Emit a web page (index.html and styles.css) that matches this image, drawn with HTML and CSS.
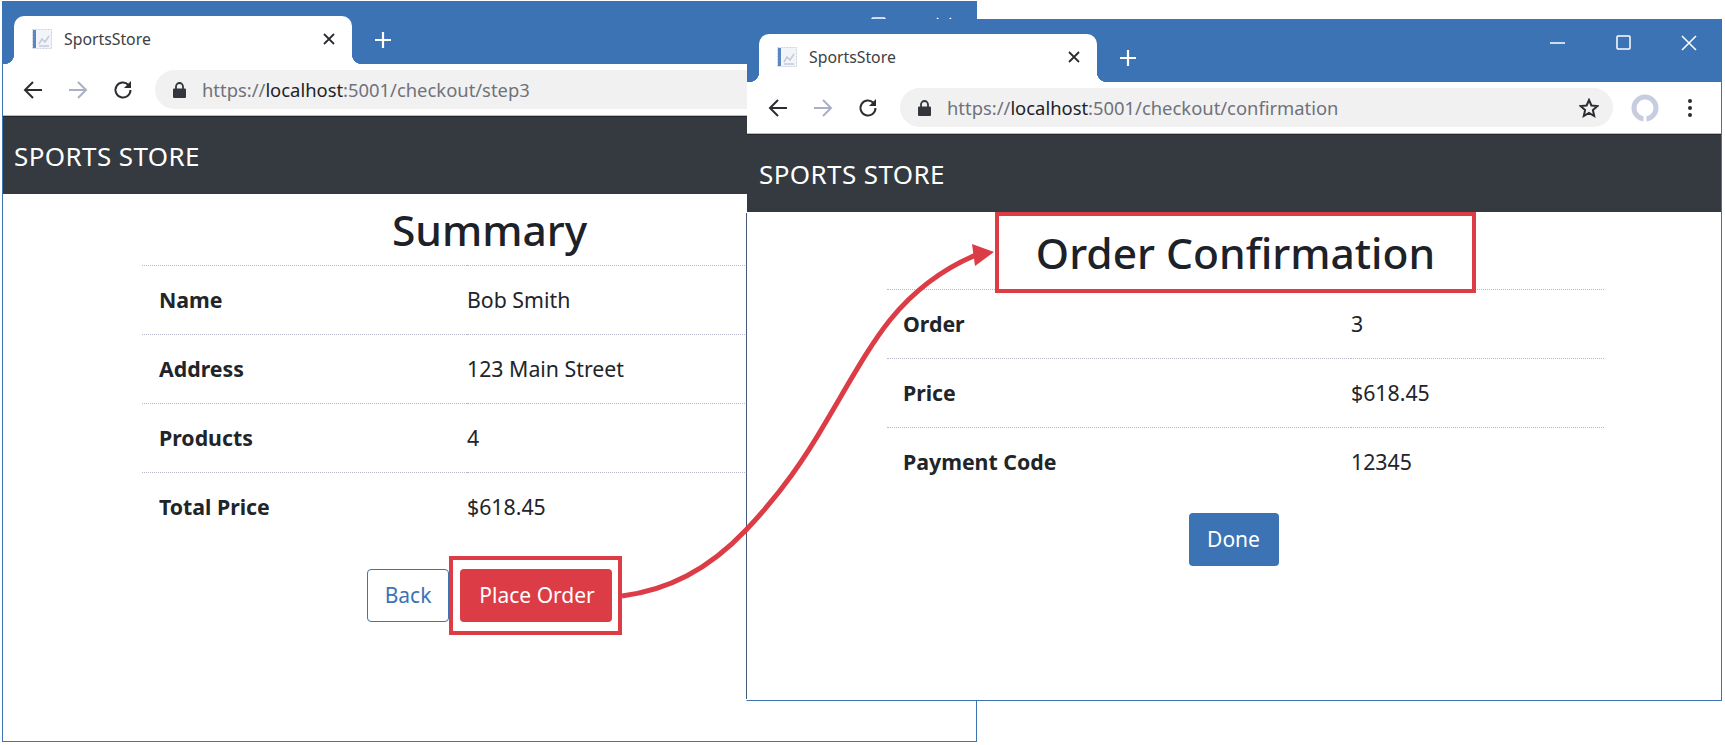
FILE: index.html
```html
<!DOCTYPE html>
<html lang="en">
<head>
  <meta charset="UTF-8" />
  <title>SportsStore</title>
  <link rel="stylesheet" href="styles.css">
</head>
<body>
  <div class="desktop">

    <div class="window window-back">
      <div class="titlebar">
        <div class="tab">
          <svg class="favicon" viewBox="0 0 22 22"><rect x="1.500" y="1.500" width="19" height="19" fill="#f3f4f9" stroke="#cdd2e2" stroke-dasharray="2 1"/><rect x="2" y="2" width="3" height="18" fill="#5b86c4"/><path d="M8 16l3-5 3 3 4-6M8 18h10" fill="none" stroke="#c2c9dc" stroke-width="1.500"/></svg>
          <span class="tab-title">SportsStore</span>
          <svg class="tab-close" viewBox="0 0 12 12"><path d="M1 1l10 10M11 1L1 11" stroke="#2b2d31" stroke-width="1.800"/></svg>
        </div>
        <svg class="new-tab" viewBox="0 0 18 18"><path d="M9 1v16M1 9h16" stroke="#fff" stroke-width="2.200"/></svg>
        <div class="controls">
          <svg viewBox="0 0 16 16"><path d="M0 8h15" stroke="#fff" stroke-width="1.500"/></svg>
          <svg viewBox="0 0 16 16"><rect x="1" y="1" width="13" height="13" rx="1" fill="none" stroke="#fff" stroke-width="1.500"/></svg>
          <svg viewBox="0 0 16 16"><path d="M1 1l14 14M15 1L1 15" stroke="#fff" stroke-width="1.500"/></svg>
        </div>
      </div>
      <div class="toolbar">
        <svg class="nav-icon" viewBox="0 0 20 20"><path d="M19 10H2M10 2l-8 8 8 8" fill="none" stroke="#2b2d31" stroke-width="2"/></svg>
        <svg class="nav-icon" viewBox="0 0 20 20"><path d="M1 10h17M10 2l8 8-8 8" fill="none" stroke="#a9afc6" stroke-width="2"/></svg>
        <svg class="nav-icon" viewBox="0 0 20 20"><path d="M17.500 10a7.500 7.500 0 1 1-2.200-5.300" fill="none" stroke="#2b2d31" stroke-width="2"/><path d="M18 1v7h-7z" fill="#2b2d31"/></svg>
        <div class="address">
          <svg class="lock" viewBox="0 0 13 16"><path d="M3 7V4.500a3.500 3.500 0 0 1 7 0V7" fill="none" stroke="#33363c" stroke-width="1.800"/><rect y="6.500" width="13" height="9.500" rx="1" fill="#33363c"/></svg>
          <span class="url">https://<b>localhost</b>:5001/checkout/step3</span>
        </div>
      </div>
      <nav class="navbar">SPORTS STORE</nav>
      <main class="page">
        <h2 class="page-title">Summary</h2>
        <table class="info info-summary">
          <tr><th>Name</th><td>Bob Smith</td></tr>
          <tr><th>Address</th><td>123 Main Street</td></tr>
          <tr><th>Products</th><td>4</td></tr>
          <tr><th>Total Price</th><td>$618.45</td></tr>
        </table>
        <div class="actions">
          <a class="btn btn-outline">Back</a>
          <a class="btn btn-danger">Place Order</a>
        </div>
      </main>
    </div>

    <div class="window window-front">
      <div class="titlebar">
        <div class="tab">
          <svg class="favicon" viewBox="0 0 22 22"><rect x="1.500" y="1.500" width="19" height="19" fill="#f3f4f9" stroke="#cdd2e2" stroke-dasharray="2 1"/><rect x="2" y="2" width="3" height="18" fill="#5b86c4"/><path d="M8 16l3-5 3 3 4-6M8 18h10" fill="none" stroke="#c2c9dc" stroke-width="1.500"/></svg>
          <span class="tab-title">SportsStore</span>
          <svg class="tab-close" viewBox="0 0 12 12"><path d="M1 1l10 10M11 1L1 11" stroke="#2b2d31" stroke-width="1.800"/></svg>
        </div>
        <svg class="new-tab" viewBox="0 0 18 18"><path d="M9 1v16M1 9h16" stroke="#fff" stroke-width="2.200"/></svg>
        <div class="controls">
          <svg viewBox="0 0 16 16"><path d="M0 8h15" stroke="#fff" stroke-width="1.500"/></svg>
          <svg viewBox="0 0 16 16"><rect x="1" y="1" width="13" height="13" rx="1" fill="none" stroke="#fff" stroke-width="1.500"/></svg>
          <svg viewBox="0 0 16 16"><path d="M1 1l14 14M15 1L1 15" stroke="#fff" stroke-width="1.500"/></svg>
        </div>
      </div>
      <div class="toolbar">
        <svg class="nav-icon" viewBox="0 0 20 20"><path d="M19 10H2M10 2l-8 8 8 8" fill="none" stroke="#2b2d31" stroke-width="2"/></svg>
        <svg class="nav-icon" viewBox="0 0 20 20"><path d="M1 10h17M10 2l8 8-8 8" fill="none" stroke="#a9afc6" stroke-width="2"/></svg>
        <svg class="nav-icon" viewBox="0 0 20 20"><path d="M17.500 10a7.500 7.500 0 1 1-2.200-5.300" fill="none" stroke="#2b2d31" stroke-width="2"/><path d="M18 1v7h-7z" fill="#2b2d31"/></svg>
        <div class="address">
          <svg class="lock" viewBox="0 0 13 16"><path d="M3 7V4.500a3.500 3.500 0 0 1 7 0V7" fill="none" stroke="#33363c" stroke-width="1.800"/><rect y="6.500" width="13" height="9.500" rx="1" fill="#33363c"/></svg>
          <span class="url">https://<b>localhost</b>:5001/checkout/confirmation</span>
          <svg class="star" viewBox="0 0 20 20"><path d="M10 2l2.400 5.500 6 .6-4.500 4 1.300 5.900L10 15l-5.200 3 1.300-5.900-4.500-4 6-.6z" fill="none" stroke="#2b2d31" stroke-width="2"/></svg>
        </div>
        <svg class="avatar" viewBox="0 0 28 28"><circle cx="14" cy="14" r="11" fill="none" stroke="#c8cce0" stroke-width="5"/><path d="M14 15v13" stroke="#fff" stroke-width="3"/></svg>
        <svg class="menu" viewBox="0 0 6 20"><circle cx="3" cy="3" r="2" fill="#2b2d31"/><circle cx="3" cy="10" r="2" fill="#2b2d31"/><circle cx="3" cy="17" r="2" fill="#2b2d31"/></svg>
      </div>
      <nav class="navbar">SPORTS STORE</nav>
      <main class="page">
        <h2 class="page-title page-title-framed">Order Confirmation</h2>
        <table class="info info-order">
          <tr><th>Order</th><td>3</td></tr>
          <tr><th>Price</th><td>$618.45</td></tr>
          <tr><th>Payment Code</th><td>12345</td></tr>
        </table>
        <div class="actions actions-order">
          <a class="btn btn-primary">Done</a>
        </div>
      </main>
    </div>

    <svg class="arrow" viewBox="0 0 1725 745">
      <path d="M622 596C668 590 708 570 746 530C782 492 805 458 827 420C853 376 870 345 890 320C916 288 945 268 976 255" fill="none" stroke="#dc3c46" stroke-width="5"/>
      <path d="M994 252L972 244L975 266z" fill="#dc3c46"/>
    </svg>
  </div>
</body>
</html>
```

FILE: styles.css
```css
* {
  box-sizing: border-box;
}
body {
  margin: 0;
  background: #fff;
  color: #212529;
  font-family: "Noto Sans", sans-serif;
}
.desktop {
  position: relative;
  width: 1725px;
  height: 745px;
  overflow: hidden;
}

/* browser windows */
.window {
  position: absolute;
  display: flex;
  flex-direction: column;
  width: 975px;
  background: #fff;
  background-clip: padding-box;
  border: 1px solid #3b73b5;
}
.window-back {
  left: 2px;
  top: 1px;
  height: 741px;
}
.window-front {
  left: 746px;
  top: 19px;
  width: 976px;
  height: 682px;
  padding-left: 1px;
  border-left-color: transparent;
}
.window-front .page {
  flex: 1;
  margin-left: -1px;
  padding-left: 1px;
  box-shadow: -2px 0 0 -1px #48587a;
}
.titlebar {
  display: flex;
  align-items: flex-end;
  flex: none;
  height: 62px;
  padding-left: 11px;
  background: #3b73b5;
}
.window-front .titlebar {
  margin-left: -1px;
  padding-left: 12px;
}
.tab {
  position: relative;
  display: flex;
  align-items: center;
  width: 338px;
  height: 48px;
  padding: 0 17px 2px 17px;
  background: #fff;
  border-radius: 10px 10px 0 0;
}
.tab::before,
.tab::after {
  content: "";
  position: absolute;
  bottom: 0;
  width: 10px;
  height: 10px;
}
.tab::before {
  left: -10px;
  background: radial-gradient(circle at 0 0, #3b73b5 10px, #fff 10.5px);
}
.tab::after {
  right: -10px;
  background: radial-gradient(circle at 100% 0, #3b73b5 10px, #fff 10.5px);
}
.favicon {
  width: 22px;
  height: 22px;
}
.tab-title {
  flex: 1;
  margin-left: 11px;
  font-size: 15.8px;
  color: #3c4043;
}
.tab-close {
  width: 12px;
  height: 12px;
}
.new-tab {
  width: 18px;
  height: 18px;
  margin: 0 0 15px 22px;
}
.controls {
  display: flex;
  gap: 49px;
  margin: 0 24px auto auto;
  padding-top: 15px;
}
.controls svg {
  width: 16px;
  height: 16px;
}
.controls svg:first-child {
  margin-right: 1px;
}

/* toolbar */
.toolbar {
  display: flex;
  align-items: center;
  flex: none;
  height: 52px;
  padding-left: 20px;
  background: #fff;
  border-bottom: 1px solid #b9bcc0;
}
.window-front .toolbar,
.window-front .navbar {
  margin-left: -1px;
}
.window-front .toolbar {
  padding-left: 21px;
}
.nav-icon {
  width: 20px;
  height: 20px;
  margin-right: 25px;
}
.address {
  display: flex;
  align-items: center;
  width: 713px;
  height: 39px;
  margin-left: -3px;
  padding: 0 14px 0 18px;
  background: #f1f1f2;
  border-radius: 20px;
}
.lock {
  width: 13px;
  height: 16px;
}
.url {
  flex: 1;
  margin-left: 16px;
  font-size: 18.4px;
  color: #6f727a;
}
.url b {
  font-weight: normal;
  color: #202226;
}
.star {
  width: 20px;
  height: 20px;
}
.avatar {
  width: 28px;
  height: 28px;
  margin-left: 18px;
}
.menu {
  width: 6px;
  height: 20px;
  margin-left: 28px;
}
.navbar {
  flex: none;
  height: 78px;
  padding-left: 11px;
  background: #343a40;
  border-top: 1px solid #23262b;
  color: #fff;
  font-size: 26px;
  letter-spacing: .4px;
  line-height: 78px;
}
.window-front .navbar {
  padding-left: 12px;
}

/* page content */
.page-title {
  margin: 0;
  font-size: 42.500px;
  font-weight: 500;
  line-height: 71px;
  text-align: center;
  color: #1d2128;
}
.page-title-framed {
  position: relative;
  z-index: 1;
  width: 481px;
  height: 81px;
  margin: 0 0 -4px 247px;
  border: 4px solid #dc3c46;
  line-height: 74px;
}
.info {
  border-collapse: collapse;
  font-size: 21.300px;
}
.info tr {
  height: 69px;
  border-top: 1px dotted #b4b8c8;
}
.info th {
  padding: 0 0 1px 17px;
  font-weight: 700;
  text-align: left;
}
.info td {
  padding: 0 0 1px;
}
.info-summary {
  width: 695px;
  margin-left: 139px;
}
.info-summary th {
  width: 325px;
}
.info-order {
  width: 717px;
  margin-left: 139px;
}
.info-order th {
  width: 464px;
  padding-left: 16px;
}
.actions {
  display: flex;
  justify-content: center;
  gap: 11px;
  margin-top: 27px;
}
.actions-order {
  margin-top: 16px;
  padding-right: 2px;
}
.btn {
  position: relative;
  display: block;
  height: 53px;
  padding: 0 17px;
  border-radius: 4px;
  font-size: 21px;
  line-height: 51px;
  white-space: nowrap;
  border: 1px solid transparent;
}
.btn-outline {
  color: #3b73b5;
  border-color: #3b73b5;
}
.btn-danger {
  width: 152px;
  padding: 0 0 0 18px;
  background: #dc3c46;
  color: #fff;
}
.btn-danger::after {
  content: "";
  position: absolute;
  inset: -14px -11px -14px -12px;
  border: 4px solid #dc3c46;
}
.btn-primary {
  width: 90px;
  padding: 0;
  background: #3b73b5;
  color: #fff;
  text-align: center;
}
.arrow {
  position: absolute;
  left: 0;
  top: 0;
  width: 1725px;
  height: 745px;
  pointer-events: none;
}
```
